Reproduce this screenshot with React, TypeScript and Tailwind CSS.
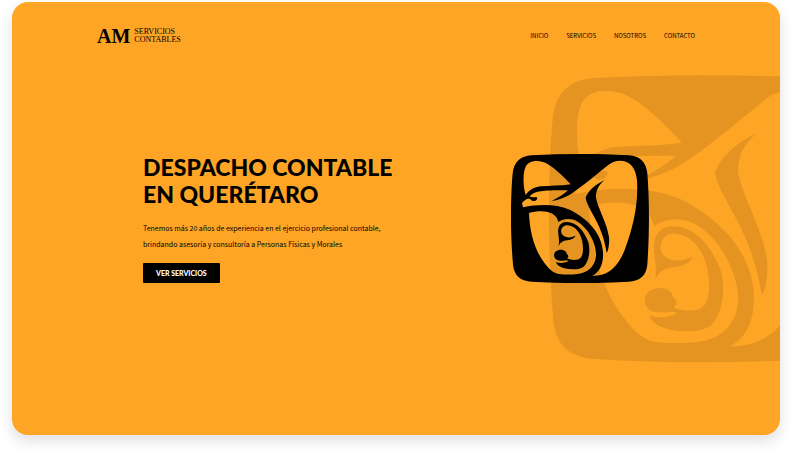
import { useId } from "react";

const navItems = ["INICIO", "SERVICIOS", "NOSOTROS", "CONTACTO"];

function EagleEmblem({ className, label }: { className: string; label?: string }) {
  const id = useId();
  return (
    <svg
      viewBox="32 26 414 388"
      className={className}
      role={label ? "img" : undefined}
      aria-label={label}
      aria-hidden={label ? undefined : true}
    >
      <mask id={id} maskUnits="userSpaceOnUse" x="32" y="26" width="414" height="388">
        {/* rounded shield */}
        <path
          fill="white"
          d="M32 220C32 160 34 115 37 84C41 50 60 32 94 30C190 25 290 25 385 30C419 32 437 50 441 84C448 170 447 270 441 358C438 390 419 407 385 409C290 415 190 415 94 409C60 407 41 390 38 358C34 310 32 265 32 220Z"
        />
        {/* left wing */}
        <path
          fill="black"
          d="M211 117C187 91 154 58 128 50C103 43 84 49 76 64C67 82 68 122 76 149C86 134 102 126 120 123C150 121 182 122 211 117Z"
        />
        {/* beak, eye, body and right wing */}
        <path
          fill="black"
          d="M65 173C69 168 74 163 80 161C85 159 89 160 92 163C96 168 101 168 105 166C112 163 112 156 108 155C100 157 92 156 88 153C103 137 125 134 203 135C190 147 173 157 153 168C177 164 196 155 213 145C252 119 289 87 320 62C337 47 358 43 377 49C398 57 407 78 410 105C414 170 402 236 373 314C359 350 338 377 309 387C297 391 286 392 276 392C302 378 310 350 308 320C305 266 264 220 208 193C165 175 112 177 68 186Z"
        />
        {/* womb */}
        <path
          fill="black"
          d="M86 203C110 196 138 196 153 204C166 210 171 219 174 230C186 220 205 219 220 223C260 239 288 292 287 330C286 360 265 383 231 386C214 388 192 388 177 386C161 384 149 374 139 361C103 320 88 260 86 203Z"
        />
        {/* feather */}
        <path
          fill="white"
          d="M313 104C282 119 263 138 256 157C259 181 283 211 297 246C310 276 315 301 319 322C324 320 328 291 326 275C319 230 293 190 287 158C286 137 294 119 313 104Z"
        />
        {/* child */}
        <g transform="translate(6.4 6.8) scale(.4488)" fill="white">
          <path d="M373 665C382 635 377 610 373 575C368 530 385 499 426 497C500 495 548 564 573 630C588 680 582 755 545 794C520 815 465 817 420 808C388 801 364 787 358 765C384 775 422 772 443 757L420 753L432 742C467 755 508 754 525 734C546 703 542 625 515 576C493 536 460 518 429 519C399 523 389 548 393 568C400 600 451 611 488 588C482 607 462 617 432 620C397 624 382 640 373 665Z" />
          <path d="M345 720C345 698 364 683 390 683C411 683 428 695 430 711C439 716 441 724 440 733C432 734 437 741 432 748C422 757 404 757 386 756C362 755 345 741 345 720Z" />
        </g>
      </mask>
      <path fill="currentColor" mask={`url(#${id})`} d="M32 26H446V414H32Z" />
    </svg>
  );
}

export default function App() {
  return (
    <div className="bg-white px-3 pt-0.5 pb-6">
      <div className="relative isolate flex aspect-[768/433] flex-col overflow-hidden rounded-2xl bg-[#ffa525] text-black shadow-[0_6px_14px_rgba(0,0,0,0.13)]">
        <EagleEmblem className="absolute top-[73px] -right-[76px] -z-10 w-[307px] text-black/10" />

        <header className="flex items-center justify-between px-[85px] pt-6">
          <a href="#inicio" className="flex items-center gap-1 font-['Liberation_Serif',serif]">
            <span className="text-xl leading-5 font-bold">AM</span>
            <span className="text-[8px] leading-2">
              SERVICIOS
              <br />
              CONTABLES
            </span>
          </a>
          <nav className="flex gap-[18px] font-['Noto_Sans_CJK_SC',sans-serif] text-[6px] leading-3">
            {navItems.map((item) => (
              <a key={item} href={`#${item.toLowerCase()}`}>
                {item}
              </a>
            ))}
          </nav>
        </header>

        <main className="flex items-start justify-between px-[131px] pt-[108px]">
          <section>
            <h1 className="font-[Lato,sans-serif] text-[23px] leading-[27px] font-black">
              DESPACHO CONTABLE
              <br />
              EN QUERÉTARO
            </h1>
            <p className="mt-3 font-['Noto_Sans_CJK_SC',sans-serif] text-[7px] leading-4">
              Tenemos más 20 años de experiencia en el ejercicio profesional contable,
              <br />
              brindando asesoría y consultoría a Personas Físicas y Morales
            </p>
            <button
              type="button"
              className="mt-[11px] block h-5 rounded-[1px] bg-black px-[13px] font-[Lato,sans-serif] text-[7px] font-black text-white"
            >
              VER SERVICIOS
            </button>
          </section>
          <EagleEmblem className="w-[138px]" label="Águila protegiendo a una madre y su hijo" />
        </main>
      </div>
    </div>
  );
}
